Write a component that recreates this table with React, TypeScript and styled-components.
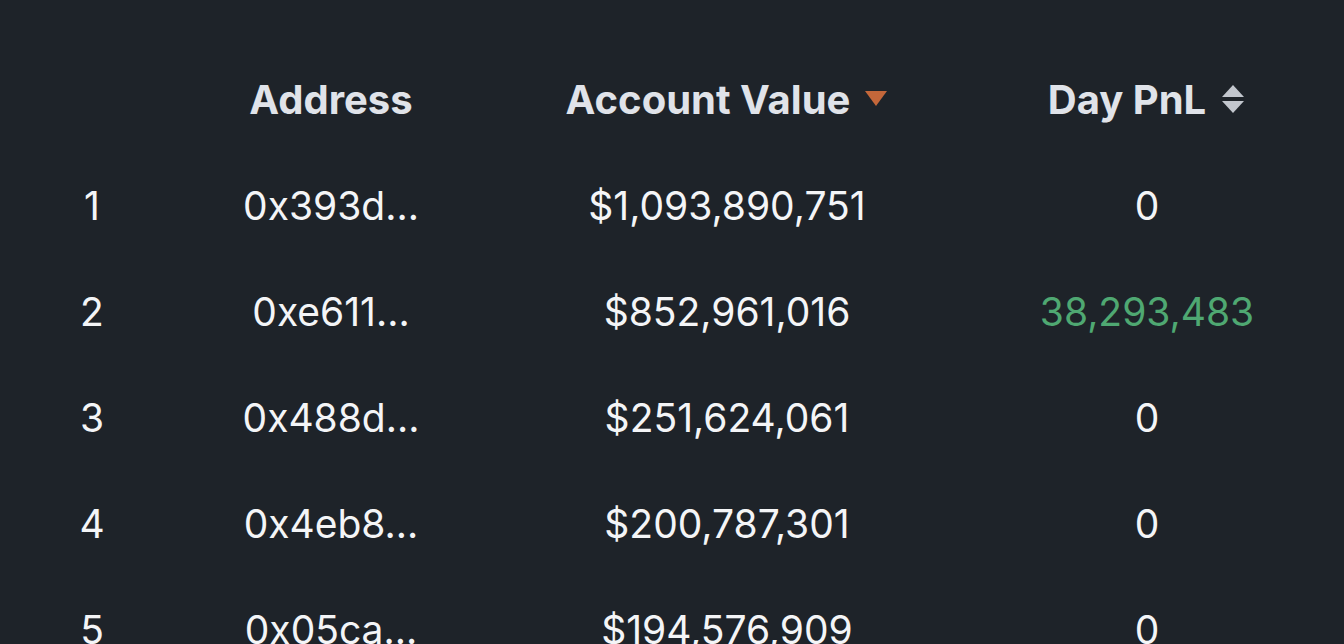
import React from "react";
import styled, { createGlobalStyle } from "styled-components";

const GlobalStyle = createGlobalStyle`
  html, body {
    margin: 0;
    padding: 0;
    background: #1e2329;
  }
  body {
    font-family: Inter, "Noto Sans", sans-serif;
    overflow: hidden;
  }
`;

interface Leader {
  rank: number;
  address: string;
  value: string;
  pnl: string;
}

const leaders: Leader[] = [
  { rank: 1, address: "0x393d...", value: "$1,093,890,751", pnl: "0" },
  { rank: 2, address: "0xe611...", value: "$852,961,016", pnl: "38,293,483" },
  { rank: 3, address: "0x488d...", value: "$251,624,061", pnl: "0" },
  { rank: 4, address: "0x4eb8...", value: "$200,787,301", pnl: "0" },
  { rank: 5, address: "0x05ca...", value: "$194,576,909", pnl: "0" },
];

const Page = styled.div`
  width: 1344px;
  height: 644px;
  padding-top: 46px;
  box-sizing: border-box;
  background: #1e2329;
  overflow: hidden;
`;

const Row = styled.div`
  display: grid;
  grid-template-columns: 184px 294px 498px 342px;
  height: 106px;
  align-items: center;
`;

const HeadCell = styled.div`
  display: flex;
  align-items: center;
  justify-content: center;
  gap: 14px;
  font-size: 40px;
  font-weight: 700;
  color: #e0e3e9;
`;

const Cell = styled.div<{ $tone?: "up" | "flat" }>`
  text-align: center;
  font-size: 39px;
  font-weight: 400;
  color: ${(p) => (p.$tone === "up" ? "#4fa872" : "#f4f5f7")};
`;

function SortDown() {
  return (
    <svg width="24" height="20" viewBox="0 0 24 20">
      <path d="M1 2 L23 2 L12 17 Z" fill="#c4673a" />
    </svg>
  );
}

function SortBoth() {
  return (
    <svg width="26" height="32" viewBox="0 0 26 32">
      <path d="M2 14 L24 14 L13 2 Z" fill="#c2c6cd" />
      <path d="M2 18 L24 18 L13 30 Z" fill="#c2c6cd" />
    </svg>
  );
}

export default function App() {
  return (
    <Page>
      <GlobalStyle />
      <Row>
        <HeadCell />
        <HeadCell>Address</HeadCell>
        <HeadCell>
          Account Value
          <SortDown />
        </HeadCell>
        <HeadCell>
          Day PnL
          <SortBoth />
        </HeadCell>
      </Row>
      {leaders.map((l) => (
        <Row key={l.rank}>
          <Cell>{l.rank}</Cell>
          <Cell>{l.address}</Cell>
          <Cell>{l.value}</Cell>
          <Cell $tone={l.pnl === "0" ? "flat" : "up"}>{l.pnl}</Cell>
        </Row>
      ))}
    </Page>
  );
}
